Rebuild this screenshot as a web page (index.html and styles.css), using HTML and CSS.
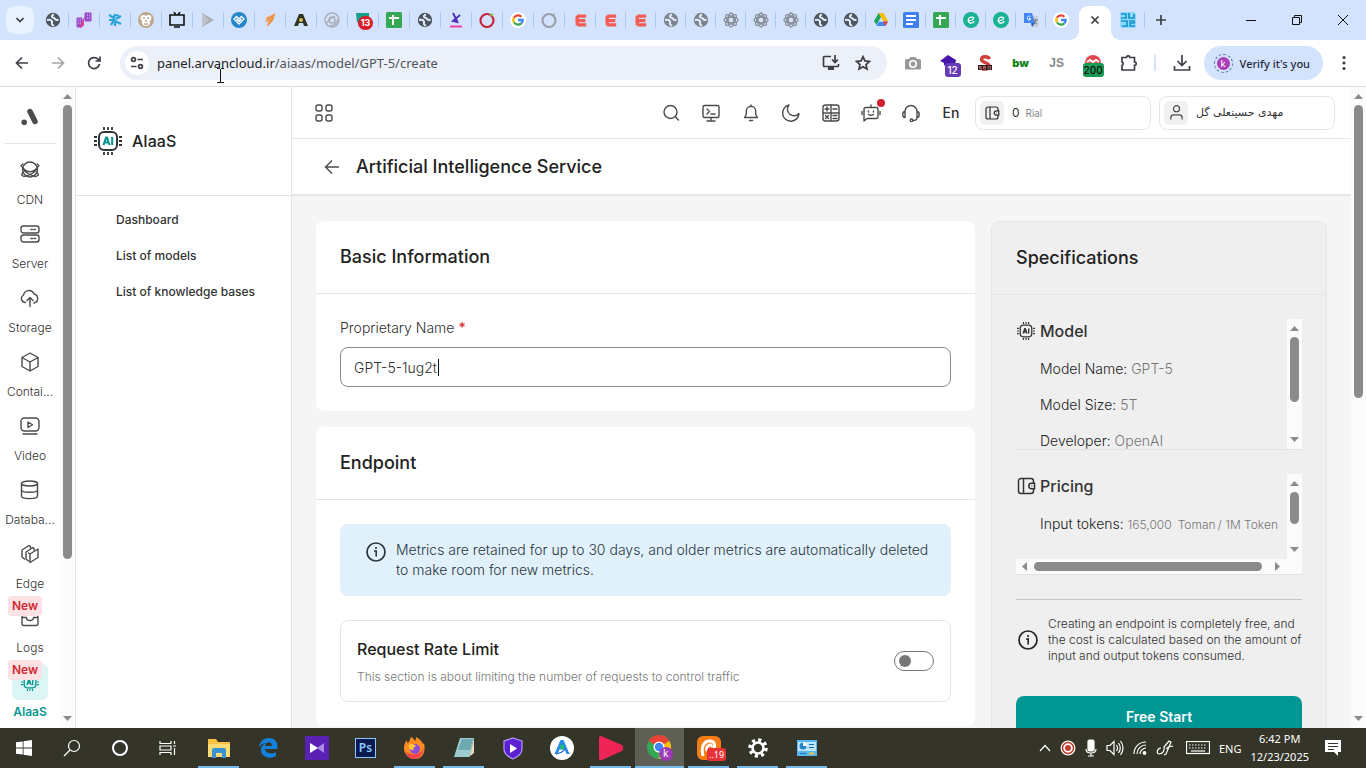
FILE: index.html
```html
<!DOCTYPE html>
<html lang="en">
<head>
<meta charset="utf-8">
<title>Artificial Intelligence Service</title>
<link rel="stylesheet" href="styles.css">
</head>
<body>
<svg class="defs" aria-hidden="true">
  <symbol id="globe" viewBox="0 0 16 16"><circle cx="8" cy="8" r="7.2" fill="currentColor"/><path d="M9 2.500c-2 .5-2.600 1.800-1.800 2.600.8.9 2 .4 2.500 1.400.5 1 1.500 1.800 3.800 1.200M2 8c2-.3 4.500 0 5 1.300.5 1.400-.8 1.700.2 3.200.4.700 1 1 2 1" fill="none" stroke="#e3ebfa" stroke-width="2"/></symbol>
  <symbol id="google" viewBox="0 0 16 16"><circle cx="8" cy="8" r="8" fill="#fff"/><g fill="none" stroke-width="2.300"><path d="M4 5.600A4.700 4.700 0 0 1 11.400 4.700" stroke="#ea4335"/><path d="M4.100 10.500A4.700 4.700 0 0 1 4 5.600" stroke="#fbbc05"/><path d="M11.300 11.400A4.700 4.700 0 0 1 4.100 10.500" stroke="#34a853"/><path d="M8 8h4.700a4.700 4.700 0 0 1-1.400 3.400" stroke="#4285f4"/></g></symbol>
  <symbol id="ebars" viewBox="0 0 16 16"><path d="M4 2.500h11M2 8h12M4 13.500h11" stroke="#f25c54" stroke-width="4"/><path d="M4 2v12" stroke="#f25c54" stroke-width="4"/></symbol>
  <symbol id="knot" viewBox="0 0 16 16"><g fill="none" stroke="#858c94" stroke-width="1.300"><ellipse cx="8" cy="8" rx="7" ry="3"/><ellipse cx="8" cy="8" rx="7" ry="3" transform="rotate(45 8 8)"/><ellipse cx="8" cy="8" rx="7" ry="3" transform="rotate(90 8 8)"/><ellipse cx="8" cy="8" rx="7" ry="3" transform="rotate(135 8 8)"/></g></symbol>
  <symbol id="sheet" viewBox="0 0 16 16"><rect width="16" height="16" rx="1.500" fill="#34a853"/><path d="M3 6h10M7 3v10" stroke="#fff" stroke-width="2"/></symbol>
  <symbol id="eapp" viewBox="0 0 16 16"><circle cx="8" cy="8" r="8" fill="#19b394"/><path d="M5.500 8.700c3 0 5.500-1 5-2.700-.5-1.500-4-1.200-5 1-1 2.500.8 4.500 2.800 4.200 1.500-.2 2.500-1 3-2.200" fill="none" stroke="#fff" stroke-width="1.300"/></symbol>
  <symbol id="chip" viewBox="0 0 28 28"><rect x="5" y="5" width="18" height="18" rx="5" fill="none" stroke="currentColor" stroke-width="2"/><path d="M10 0v3M14 0v3M18 0v3M10 25v3M14 25v3M18 25v3M0 10h3M0 14h3M0 18h3M25 10h3M25 14h3M25 18h3" stroke="currentColor" stroke-width="1.800"/><path d="M9.500 18l2.600-7.500h.8l2.600 7.500M10.500 15.500h4M18.200 10v8" fill="none" stroke="var(--chip-ink, currentColor)" stroke-width="2.100"/></symbol>
  <symbol id="wallet" viewBox="0 0 20 20"><path d="M17.500 7V5a2.500 2.500 0 0 0-2.500-2.500H5A2.500 2.500 0 0 0 2.500 5v10A2.500 2.500 0 0 0 5 17.500h10a2.500 2.500 0 0 0 2.500-2.500v-2M7.500 2.500v15M18.500 7.300h-3a2.700 2.700 0 0 0 0 5.400h3zM15.500 10h.8" fill="none" stroke="currentColor" stroke-width="1.500"/></symbol>
  <symbol id="info" viewBox="0 0 20 20"><circle cx="10" cy="10" r="9" fill="none" stroke="currentColor" stroke-width="1.700"/><path d="M8 9h2.200v5.500M10 5v2" fill="none" stroke="currentColor" stroke-width="1.600"/></symbol>
  <symbol id="up" viewBox="0 0 9 5"><path d="M0 5L4.500 0 9 5z" fill="#8b8b8b"/></symbol>
  <symbol id="down" viewBox="0 0 9 5"><path d="M0 0l4.500 5L9 0z" fill="#8b8b8b"/></symbol>
</svg>

<header class="tabstrip">
  <button class="tab-search" aria-label="Search tabs"><svg width="10" height="10" viewBox="0 0 10 10"><path d="M1.500 3l3.500 3.500L8.500 3" class="line2"/></svg></button>
  <div class="tabs wide">
    <button class="tab" aria-label="Tab"><svg class="fav dark"><use href="#globe"/></svg></button>
    <button class="tab" aria-label="Tab"><svg class="fav" viewBox="0 0 16 16"><path d="M1 6h5v9H1zM9 1h6v8H9zM5 11l5-7" fill="#9b4dca" stroke="#9b4dca"/><path d="M2 8h3M2 11h3M11 3h3M11 6h3" stroke="#e7c6f7" stroke-dasharray="1 1"/><path d="M4 15l3-2V8" stroke="#ec3f96" stroke-width="2" fill="none"/></svg></button>
    <button class="tab" aria-label="Tab"><svg class="fav" viewBox="0 0 16 16"><path d="M2 3l5 3 1-4M2 8h5l-3 5M9 7l5-3M8 9l6 3M9 3l3 1M8 10v4" stroke="#27a5d8" stroke-width="2.200" fill="none"/></svg></button>
    <button class="tab" aria-label="Tab"><svg class="fav" viewBox="0 0 16 16"><circle cx="8" cy="8" r="8" fill="#bda98d"/><circle cx="5.500" cy="6" r="3" fill="#fff"/><circle cx="10.500" cy="6" r="3" fill="#fff"/><circle cx="8" cy="10" r="4" fill="#fff"/><path d="M5 6h2M9 6h2M8 8v2M6 12h4" stroke="#9b8465"/></svg></button>
    <button class="tab" aria-label="Tab"><svg class="fav" viewBox="0 0 16 16"><path d="M1 3h14v10H1zM5 15h6M5 0l2 3M11 0L9 3" fill="none" stroke="#111" stroke-width="1.600"/></svg></button>
    <button class="tab" aria-label="Tab"><svg class="fav" viewBox="0 0 16 16"><path d="M2 1l12 7-12 7z" fill="#a9adb3"/><path d="M2 1l7 7-7 7z" fill="#bfc3ca"/></svg></button>
    <button class="tab" aria-label="Tab"><svg class="fav" viewBox="0 0 16 16"><circle cx="8" cy="8" r="8" fill="#2487c9"/><path d="M3 7l2.500-2.500L8 7l2.500-2.500L13 7l-5 5zM5.500 7L8 9.500 10.500 7" fill="none" stroke="#fff" stroke-width="1.300"/></svg></button>
    <button class="tab" aria-label="Tab"><svg class="fav" viewBox="0 0 16 16"><path d="M14 1L3 6l2 1-2 3 3-1-1 6 6-6 1-4z" fill="#f7a45f"/><path d="M4 9l8-6M6 13l6-8" stroke="#e07a2c"/></svg></button>
    <button class="tab" aria-label="Tab"><svg class="fav" viewBox="0 0 16 16"><path d="M1 14L6 2h4l5 12h-4l-1-3H6l-1 3z" fill="#30361f"/><circle cx="8" cy="8" r="2" fill="#d5bd57"/></svg></button>
    <button class="tab" aria-label="Tab"><svg class="fav" viewBox="0 0 16 16"><g fill="none" stroke="#aab1bb" stroke-width="1.600"><circle cx="8" cy="8" r="7"/><circle cx="8" cy="8" r="3"/><path d="M2 11c3 0 3-7 9-6M5 14c5 0 8-3 9-7"/></g></svg></button>
    <button class="tab badge-tab" aria-label="Tab"><svg class="fav" viewBox="0 0 16 16"><path d="M1 1h13v13l-7 1-5-5z" fill="#14a08a"/></svg><span class="fav-count">13</span></button>
    <button class="tab" aria-label="Tab"><svg class="fav"><use href="#sheet"/></svg></button>
    <button class="tab" aria-label="Tab"><svg class="fav dark"><use href="#globe"/></svg></button>
    <button class="tab" aria-label="Tab"><svg class="fav" viewBox="0 0 16 16"><path d="M5 1l5 10M12 3L5 9l5 1" fill="none" stroke="#4b2bb8" stroke-width="1.800"/><path d="M2 14.500h12" stroke="#f03ab0" stroke-width="2"/></svg></button>
    <button class="tab" aria-label="Tab"><svg class="fav" viewBox="0 0 16 16"><circle cx="8" cy="8.500" r="6.500" fill="none" stroke="#c9243f" stroke-width="2.200"/><path d="M10 3l4-2-1 4z" fill="#7db83a"/></svg></button>
    <button class="tab" aria-label="Tab"><svg class="fav"><use href="#google"/></svg></button>
    <button class="tab" aria-label="Tab"><svg class="fav" viewBox="0 0 16 16"><circle cx="8" cy="8.500" r="6.500" fill="none" stroke="#9aa1aa" stroke-width="2.200"/><path d="M10 3l4-2-1 4z" fill="#9aa1aa"/></svg></button>
    <button class="tab" aria-label="Tab"><svg class="fav bars"><use href="#ebars"/></svg></button>
  </div>
  <div class="tabs">
    <button class="tab" aria-label="Tab"><svg class="fav bars"><use href="#ebars"/></svg></button>
    <button class="tab" aria-label="Tab"><svg class="fav bars"><use href="#ebars"/></svg></button>
    <button class="tab" aria-label="Tab"><svg class="fav gray"><use href="#globe"/></svg></button>
    <button class="tab" aria-label="Tab"><svg class="fav gray"><use href="#globe"/></svg></button>
    <button class="tab" aria-label="Tab"><svg class="fav"><use href="#knot"/></svg></button>
    <button class="tab" aria-label="Tab"><svg class="fav"><use href="#knot"/></svg></button>
    <button class="tab" aria-label="Tab"><svg class="fav"><use href="#knot"/></svg></button>
    <button class="tab" aria-label="Tab"><svg class="fav dark"><use href="#globe"/></svg></button>
    <button class="tab" aria-label="Tab"><svg class="fav dark"><use href="#globe"/></svg></button>
    <button class="tab" aria-label="Tab"><svg class="fav" viewBox="0 0 16 16"><path d="M5.500 1h5L8 5.500 3.500 13 1 9z" fill="#20a464"/><path d="M5.500 1h5L15 9h-5z" fill="#fbbc04"/><path d="M3.500 14L6 9.500h9L12.500 14z" fill="#4285f4"/><path d="M10 9.500h5L12.500 14z" fill="#ea4335"/><path d="M8 5.500l2.300 4H5.700z" fill="#d3e3fd"/></svg></button>
    <button class="tab" aria-label="Tab"><svg class="fav" viewBox="0 0 16 16"><rect width="16" height="16" rx="1.500" fill="#3f7fee"/><path d="M3 4h10M3 8h10M3 12h7" stroke="#fff" stroke-width="1.800"/></svg></button>
    <button class="tab" aria-label="Tab"><svg class="fav"><use href="#sheet"/></svg></button>
    <button class="tab" aria-label="Tab"><svg class="fav"><use href="#eapp"/></svg></button>
    <button class="tab" aria-label="Tab"><svg class="fav"><use href="#eapp"/></svg></button>
    <button class="tab" aria-label="Tab"><svg class="fav" viewBox="0 0 16 16"><path d="M6 4h9v11H9z" fill="#c9ced6"/><path d="M1 1h8l3 10H1z" fill="#4285f4"/><path d="M8 11h4l-3 4z" fill="#2a56c6"/><path d="M7.500 4.500A2 2 0 1 0 7 8l.5-1.500H6" fill="none" stroke="#fff"/><path d="M10.500 8H15M13 7c0 3-1 4-2 5M11.500 9c1 2 2 3 3 3" fill="none" stroke="#737980"/></svg></button>
    <button class="tab last" aria-label="Tab"><svg class="fav"><use href="#google"/></svg></button>
  </div>
  <button class="tab active" aria-label="Close tab"><svg width="10" height="10" viewBox="0 0 10 10"><path d="M1.500 1.500l7 7M8.500 1.500l-7 7" class="line2"/></svg></button>
  <button class="tab after" aria-label="Tab"><svg class="fav" viewBox="0 0 16 16"><rect width="16" height="16" rx="2" fill="#8fd8f7"/><path d="M1 2h5v4H1M9 1v5h5V2M1 9h6v5H2M9 9h5v2h-4v3h5" fill="none" stroke="#1695d3" stroke-width="1.700"/></svg></button>
  <button class="new-tab" aria-label="New tab"><svg width="12" height="12" viewBox="0 0 12 12"><path d="M6 1v10M1 6h10" class="line2"/></svg></button>
  <div class="win-controls">
    <button aria-label="Minimize"><svg width="10" height="10" viewBox="0 0 10 10"><path d="M0 5.500h10" class="line1"/></svg></button>
    <button aria-label="Restore"><svg width="10" height="10" viewBox="0 0 10 10"><path d="M.5 2.500h7v7h-7zM2.500 2V.5h7v7H8" class="line1"/></svg></button>
    <button aria-label="Close"><svg width="10" height="10" viewBox="0 0 10 10"><path d="M0 0l10 10M10 0L0 10" class="line1"/></svg></button>
  </div>
</header>

<div class="toolbar">
  <button class="nav-btn" aria-label="Back"><svg width="16" height="16" viewBox="0 0 16 16"><path d="M14 8H3M8 2.500L2.500 8 8 13.500" class="line2"/></svg></button>
  <button class="nav-btn off" aria-label="Forward"><svg width="16" height="16" viewBox="0 0 16 16"><path d="M2 8h11M8 2.500L13.500 8 8 13.500" class="line2"/></svg></button>
  <button class="nav-btn" aria-label="Reload"><svg width="16" height="16" viewBox="0 0 16 16"><path d="M13.500 9A5.500 5.500 0 1 1 12 4.200L14 6M14 1.500V6H9.500" class="line2"/></svg></button>
  <div class="omnibox">
    <span class="site-chip"><svg width="14" height="14" viewBox="0 0 14 14"><path d="M7.500 3.500H13M1 10.500h5.500" class="line2"/><circle cx="3.500" cy="3.500" r="1.900" class="line2"/><circle cx="10.500" cy="10.500" r="1.900" class="line2"/></svg></span>
    <span class="url">panel.arvancloud.ir<span class="path">/aiaas/model/GPT-5/create</span></span>
    <button aria-label="Install app"><svg width="18" height="16" viewBox="0 0 18 16"><path d="M9 1.500H2.500q-1 0-1 1v8q0 1 1 1h13q1 0 1-1V9M13 0v7M10 4.500l3 3 3-3" class="line2"/><path d="M6 12h6v3H6z" fill="#3c4045"/></svg></button>
    <button aria-label="Bookmark"><svg width="16" height="16" viewBox="0 0 16 16"><path d="M8 1.700l1.900 4.200 4.600.5L11 9.500l1 4.600L8 11.700l-4 2.400 1-4.600L1.500 6.400l4.600-.5z" class="line2"/></svg></button>
  </div>
  <div class="extensions">
    <button aria-label="Screenshot"><svg width="16" height="14" viewBox="0 0 16 14"><path d="M1.500 3H4l1.500-2h5L12 3h2.500Q16 3 16 4.500v8q0 1-1.500 1h-13Q0 13.500 0 12.500v-8Q0 3 1.500 3z" fill="#999"/><circle cx="8" cy="8" r="3.200" fill="none" stroke="#fff" stroke-width="1.600"/></svg></button>
    <button aria-label="Extension" class="ext-badge"><svg width="18" height="18" viewBox="0 0 18 18"><path d="M8 1l8 5-1 5-6 3-5-3v-2L0 7z" fill="#4716a8"/></svg><span class="count violet">12</span></button>
    <button aria-label="SEO"><svg width="16" height="16" viewBox="0 0 16 16"><path d="M12.500 4C11 1 4.500 1 4.500 4.500S12 7 12 11s-7 4-8.500 1" fill="none" stroke="#cd4138" stroke-width="3.400"/><path d="M1 10h14v5H1z" fill="#301512"/><path d="M4.500 11.500H2v1.200h2.500V14H2M9 11.500H6.500V14H9M6.500 12.700H9M11 11.500h2.500V14H11z" fill="none" stroke="#d98b84" stroke-width=".7"/></svg></button>
    <button class="bw">bw</button>
    <button class="js">JS</button>
    <button aria-label="Extension" class="ext-badge"><svg width="18" height="18" viewBox="0 0 18 18"><path d="M1 9a8 8 0 0 1 16 0z" fill="#e5484d"/><path d="M3 8l3-2 3 2 3-2 3 2" stroke="#fff" stroke-width="2" fill="none"/></svg><span class="count green">200</span></button>
    <button aria-label="Extensions"><svg width="17" height="17" viewBox="0 0 17 17"><path d="M2 2.500h4.500a1.700 1.700 0 0 1 3.400 0h4.600v4.400a1.700 1.700 0 0 1 0 3.400v4.700H2v-4.500a2 2 0 0 0 0-3.600z" class="line2"/></svg></button>
  </div>
  <button class="download" aria-label="Downloads"><svg width="18" height="18" viewBox="0 0 18 18"><path d="M9 1v10M4.500 7L9 11.500 13.500 7M1.500 12v4h15v-4" class="line2"/></svg></button>
  <button class="profile"><span class="avatar">k</span>Verify it's you</button>
  <button class="menu" aria-label="Menu"><svg width="4" height="16" viewBox="0 0 4 16"><circle cx="2" cy="2.500" r="1.600"/><circle cx="2" cy="8" r="1.600"/><circle cx="2" cy="13.500" r="1.600"/></svg></button>
  <svg class="pointer" width="7" height="15" viewBox="0 0 7 15"><path d="M0 .5h2.500l1 1 1-1H7M0 14.500h7M3.500 1v13" fill="none" stroke="#111"/></svg>
</div>

<div class="app">
  <nav class="rail" aria-label="Products">
    <div class="rail-list">
      <a class="brand" href="#" aria-label="Arvan Cloud"><svg width="18" height="18" viewBox="0 0 18 18"><path d="M9 3.500l5 10" stroke="#4b4b4b" stroke-width="5.500" stroke-linecap="round"/><circle cx="3.200" cy="14.200" r="2.800" fill="#4b4b4b"/></svg></a>
      <a class="product" href="#"><span class="tile"><svg class="ico" viewBox="0 0 20 20"><circle cx="10" cy="9.500" r="7.500"/><path d="M3 4L1 5.500 3 8c4 5 10 5 14 0l2-2.500L17 4M3 12l-1.500 3L4 16.500c5-1 11-4 13-8M17 12l1.500 3-2.500 1.500c-5-1-11-4-13-8"/></svg></span><span class="name">CDN</span></a>
      <a class="product" href="#"><span class="tile"><svg class="ico" viewBox="0 0 20 20"><rect x="1" y="2" width="18" height="7" rx="2.500"/><rect x="1" y="11" width="18" height="7" rx="2.500"/><path d="M11 5.500h1.500M14 5.500h1.500M11 14.500h1.500M14 14.500h1.500"/></svg></span><span class="name">Server</span></a>
      <a class="product" href="#"><span class="tile"><svg class="ico" viewBox="0 0 20 20"><path d="M5.500 14.500a4 4 0 0 1-2-7.500 5.500 5.500 0 0 1 10.500-1 4.600 4.600 0 0 1 0 9M10 18.500V10M7 12.500L10 9.500l3 3"/></svg></span><span class="name">Storage</span></a>
      <a class="product" href="#"><span class="tile"><svg class="ico" viewBox="0 0 20 20"><path d="M10 1l8 4.500v9L10 19l-8-4.500v-9zM2 5.500l8 4.500 8-4.500M10 10v9"/></svg></span><span class="name">Contai...</span></a>
      <a class="product" href="#"><span class="tile"><svg class="ico" viewBox="0 0 20 20"><rect x="1" y="2" width="18" height="13" rx="3.500"/><path d="M8 6v5.500l4.500-2.750zM3 18h14"/></svg></span><span class="name">Video</span></a>
      <a class="product" href="#"><span class="tile"><svg class="ico" viewBox="0 0 20 20"><ellipse cx="9.500" cy="3.500" rx="8" ry="2.500"/><path d="M1.500 3.500v12.500c0 3.500 16 3.500 16 0V3.500M1.500 10c0 3 16 3 16 0"/></svg></span><span class="name">Databa...</span></a>
      <a class="product" href="#"><span class="tile"><svg class="ico" viewBox="0 0 20 20"><path d="M4.500 15L2 13V6l7-4.500 1.500 1V4M8.500 17L6 15V8l7-4.500 1 1V6M10 10l8-5v8.500l-8 5zL8.500 9"/></svg></span><span class="name">Edge</span></a>
      <a class="product" href="#"><span class="tile"><svg class="ico" viewBox="0 0 20 20"><path d="M2 9l2-6h12l2 6v6.500a2 2 0 0 1-2 2H4a2 2 0 0 1-2-2zM2 9.500h4.500c0 4 7 4 7 0H18"/></svg></span><span class="name">Logs</span><span class="new">New</span></a>
      <a class="product current" href="#"><span class="tile"><svg class="ico solid"><use href="#chip"/></svg></span><span class="name">AIaaS</span><span class="new">New</span></a>
    </div>
    <div class="scroll"><svg class="arrow"><use href="#up"/></svg><div class="track"><div class="thumb" style="height:75%"></div></div><svg class="arrow"><use href="#down"/></svg></div>
  </nav>

  <aside class="service">
    <div class="service-head"><svg class="chip-logo"><use href="#chip"/></svg><span>AIaaS</span></div>
    <ul class="service-menu">
      <li><a href="#">Dashboard</a></li>
      <li><a href="#">List of models</a></li>
      <li><a href="#">List of knowledge bases</a></li>
    </ul>
  </aside>

  <main class="main">
    <div class="topbar">
      <button class="tool" aria-label="Apps"><svg class="ico" viewBox="0 0 20 20"><rect x="2" y="2" width="6" height="6" rx="2"/><rect x="12" y="2" width="6" height="6" rx="2"/><rect x="2" y="12" width="6" height="6" rx="2"/><rect x="12" y="12" width="6" height="6" rx="2"/></svg></button>
      <div class="tools">
        <button class="tool" aria-label="Search"><svg class="ico" viewBox="0 0 20 20"><circle cx="9.500" cy="9" r="6.500"/><path d="M14.500 14l3 3"/></svg></button>
        <button class="tool" aria-label="Console"><svg class="ico" viewBox="0 0 20 20"><rect x="2" y="2.500" width="16" height="12" rx="1.500"/><path d="M6 6l2.500 2.500L6 11M10 11h4M10 14.500v3.500M6 18h8"/></svg></button>
        <button class="tool" aria-label="Notifications"><svg class="ico" viewBox="0 0 20 20"><path d="M3.500 14.500h13l-1.800-3V8a4.700 4.700 0 0 0-9.400 0v3.500zM8.500 17.500h3M10 2v1.500"/></svg></button>
        <button class="tool" aria-label="Dark mode"><svg class="ico" viewBox="0 0 20 20"><path d="M8 2a6.500 6.500 0 0 0 10 8.500A8.200 8.200 0 1 1 8 2z"/></svg></button>
        <button class="tool" aria-label="Calculator"><svg class="ico" viewBox="0 0 20 20"><rect x="2" y="2" width="16" height="16" rx="2.500"/><path d="M10 2v16M2 10h16M4 6h4M6 4v4M12 6h4M4.500 12.500l3 3M7.500 12.500l-3 3M12 12.500h4M12 15.500h4"/></svg></button>
        <button class="tool bot" aria-label="Assistant"><svg class="ico" viewBox="0 0 20 20"><path d="M3 18V6a1.500 1.500 0 0 1 1.500-1.500h11A1.500 1.500 0 0 1 17 6v8a1.500 1.500 0 0 1-1.500 1.500H6zM10 2v2.500M1 8.500v3M19 8.500v3M7.500 8v1M12.500 8v1M7.500 11.500q2.500 1.500 5 0"/></svg></button>
        <button class="tool" aria-label="Support"><svg class="ico" viewBox="0 0 20 20"><path d="M4 8.500a6 6 0 0 1 12 0M4 8.500c-3 0-3 6 0 6zM16 8.500c3 0 3 6 0 6zM16 14.500q0 3-4 3"/><circle cx="10.500" cy="17.300" r="1.300"/></svg></button>
        <button class="tool lang">En</button>
        <button class="account wallet"><span class="mini"><svg class="wallet-ico"><use href="#wallet"/></svg></span><span class="amount">0</span><span class="unit">Rial</span></button>
        <button class="account"><span class="mini"><svg class="user-ico" viewBox="0 0 18 18"><circle cx="9" cy="5" r="3.200"/><path d="M3 16.500v-2q0-3 3-3h6q3 0 3 3v2"/></svg></span><span class="person" lang="fa" dir="rtl">مهدی حسینعلی گل</span></button>
      </div>
    </div>
    <div class="titlebar">
      <button class="back" aria-label="Back"><svg width="16" height="16" viewBox="0 0 16 16"><path d="M15 8H2M8 1.500L1.500 8 8 14.500"/></svg></button>
      <h1>Artificial Intelligence Service</h1>
    </div>
    <div class="content">
      <div class="forms">
        <section class="card">
          <h2>Basic Information</h2>
          <div class="card-body">
            <label for="pname">Proprietary Name <span class="req">*</span></label>
            <div class="field"><input id="pname" type="text" value="GPT-5-1ug2t"><span class="caret"></span></div>
          </div>
        </section>
        <section class="card">
          <h2>Endpoint</h2>
          <div class="card-body">
            <div class="notice"><svg class="info"><use href="#info"/></svg><p>Metrics are retained for up to 30 days, and older metrics are automatically deleted to make room for new metrics.</p></div>
            <div class="option">
              <div><h3><label for="limit">Request Rate Limit</label></h3><p>This section is about limiting the number of requests to control traffic</p></div>
              <input id="limit" class="switch" type="checkbox" role="switch">
            </div>
          </div>
        </section>
      </div>
      <aside class="specs">
        <h2>Specifications</h2>
        <div class="specs-body">
          <div class="pane model">
            <div class="pane-view">
              <h3><svg class="spec-ico"><use href="#chip"/></svg>Model</h3>
              <p>Model Name: <span>GPT-5</span></p>
              <p>Model Size: <span>5T</span></p>
              <p>Developer: <span>OpenAI</span></p>
            </div>
            <div class="scroll"><svg class="arrow"><use href="#up"/></svg><div class="track"><div class="thumb" style="height:69%"></div></div><svg class="arrow"><use href="#down"/></svg></div>
          </div>
          <div class="pane pricing">
            <div class="pane-view">
              <h3><svg class="spec-ico"><use href="#wallet"/></svg>Pricing</h3>
              <p>Input tokens: <span class="price"><span>165,000</span><span>Toman</span></span><span class="per">/ 1M Token</span></p>
            </div>
            <div class="scroll"><svg class="arrow"><use href="#up"/></svg><div class="track"><div class="thumb" style="height:65%"></div></div><svg class="arrow"><use href="#down"/></svg></div>
            <div class="scroll flat"><svg class="arrow" viewBox="0 0 5 9"><path d="M5 0L0 4.500 5 9z" fill="#8b8b8b"/></svg><div class="track"><div class="thumb" style="width:97%"></div></div><svg class="arrow" viewBox="0 0 5 9"><path d="M0 0l5 4.500L0 9z" fill="#8b8b8b"/></svg></div>
          </div>
          <div class="cost"><svg class="info"><use href="#info"/></svg><p>Creating an endpoint is completely free, and the cost is calculated based on the amount of input and output tokens consumed.</p></div>
          <button class="start">Free Start</button>
        </div>
      </aside>
    </div>
  </main>
  <div class="scroll page"><svg class="arrow"><use href="#up"/></svg><div class="track"><div class="thumb" style="height:48.5%"></div></div><svg class="arrow"><use href="#down"/></svg></div>
</div>

<footer class="taskbar">
  <div class="system">
    <button aria-label="Start"><svg width="16" height="16" viewBox="0 0 16 16"><path d="M0 2.300L6.700 1.400v6.200H0zM7.500 1.300L16 0v7.600H7.500zM0 8.400h6.700v6.200L0 13.700zM7.500 8.400H16V16l-8.500-1.300z" fill="#fff"/></svg></button>
    <button aria-label="Search"><svg width="18" height="18" viewBox="0 0 18 18"><circle cx="11" cy="7" r="5.500"/><path d="M7 11l-6 6"/></svg></button>
    <button aria-label="Cortana"><svg width="18" height="18" viewBox="0 0 18 18"><circle cx="9" cy="9" r="7" stroke-width="2"/></svg></button>
    <button aria-label="Task view"><svg width="18" height="18" viewBox="0 0 18 18"><path d="M1 2v2.500h11V2M1 16v-2.500h11V16M1 7h11v4H1zM15.500 2v3M15.500 9v7M14 7h3"/></svg></button>
  </div>
  <div class="apps">
    <button class="run" aria-label="File Explorer"><svg width="22" height="20" viewBox="0 0 22 20"><path d="M0 1h8l2 3h12v15H0z" fill="#f6c142"/><path d="M0 6h22v13H0z" fill="#fbdb76"/><path d="M4 20v-8q0-2 2-2h10q2 0 2 2v8h-4v-5H8v5z" fill="#3992d3"/></svg></button>
    <button aria-label="Edge"><svg width="20" height="20" viewBox="0 0 20 20"><path d="M1 9C2 3 6 0 11 0c6 0 9 4 8.500 11H7c0 4 7 6 11 3v4c-6 4-15 1-15-6 0-4 3-6 5-7-3 0-5 2-7 4zm6-1h7c0-5-6-5-7 0z" fill="#1581dc"/></svg></button>
    <button aria-label="Media"><svg width="24" height="24" viewBox="0 0 24 24"><path d="M0 0h24v24H0z" fill="#5b21b5"/><path d="M19 7v10l-7-5z" fill="#a989e3"/><path d="M5 7l8 5-8 5z" fill="#fff"/></svg></button>
    <button aria-label="Photoshop"><span class="ps">Ps</span></button>
    <button class="run" aria-label="Firefox"><svg width="22" height="22" viewBox="0 0 22 22"><path d="M11 22C4 22 0 17 0 11c0-3 1-6 3-8v3l2-1 2-5c2 1 3 2 4 4 1-1 1-3 1-4 5 3 6 5 7 7l1-1c2 8-1 16-9 16z" fill="#ff8b21"/><path d="M1 13c2 6 16 7 19-3-1 8-5 12-10 12S2 18 1 13z" fill="#f0414f"/><circle cx="11" cy="12" r="5" fill="#8c4bd8"/><path d="M5 8c2-2 5-1 7 1l-3 2 1 2c-4 0-6-2-5-5z" fill="#ffca3a"/></svg></button>
    <button class="run" aria-label="Notepad"><svg width="22" height="22" viewBox="0 0 22 22"><path d="M7 1h14l-5 19H1z" fill="#9cccd1"/><path d="M9 2h11l-3 11H5z" fill="#6da9b1"/><path d="M16 20l5-19v15z" fill="#e1d9c2"/></svg></button>
    <button aria-label="VPN"><svg width="20" height="23" viewBox="0 0 20 23"><path d="M10 1l9 3v8q0 6-9 10-9-4-9-10V4z" fill="#5b20d2" stroke="#b39bf0"/><path d="M7 7l7 4.500L7 16z" fill="#fff"/></svg></button>
    <button aria-label="App store"><svg width="24" height="24" viewBox="0 0 24 24"><circle cx="12" cy="12" r="12" fill="#fff"/><path d="M10.500 4h3l6 14h-3l-2-4.500h-5L7.500 18h-3z" fill="#2789e9"/><circle cx="12" cy="11" r="2.500" fill="#20ba79"/><path d="M6 18q6-1 9-5" fill="none" stroke="#1d5fc0"/></svg></button>
    <button class="run" aria-label="Player"><svg width="24" height="24" viewBox="0 0 24 24"><path d="M2 0q-2 0-2 2v20q0 3 3 2l20-9q3-3 0-6z" fill="#ee2457"/></svg></button>
    <button class="run focus" aria-label="Chrome"><svg width="26" height="26" viewBox="0 0 26 26"><circle cx="12" cy="12" r="12" fill="#34a853"/><path d="M12 12L1.600 6A12 12 0 0 1 22.400 6z" fill="#ea4335"/><path d="M12 12L22.400 6A12 12 0 0 1 12 24z" fill="#fbbc05"/><circle cx="12" cy="12" r="5.500" fill="#fff"/><circle cx="12" cy="12" r="4.200" fill="#4285f4"/><circle cx="19" cy="19" r="7" fill="#9b3bb5"/></svg><span class="on-k">k</span></button>
    <button class="run" aria-label="Messenger"><svg width="24" height="24" viewBox="0 0 24 24"><rect width="24" height="24" rx="6" fill="#f57c14"/><path d="M6 20C4 12 6 5 13 5c6 0 6 8 1 10-4 1-6-2-3-5 2-2 4-1 3 1" fill="none" stroke="#fff" stroke-width="3"/></svg><span class="on-19">..19</span></button>
    <button class="run" aria-label="Settings"><svg width="20" height="20" viewBox="0 0 20 20"><circle cx="10" cy="10" r="8" class="teeth"/><circle cx="10" cy="10" r="5.500" class="gear"/></svg></button>
    <button class="run" aria-label="Control panel"><svg width="20" height="16" viewBox="0 0 20 16"><path d="M0 0h20v16H0z" fill="#58b6ef"/><path d="M1 2h18v9H1z" fill="#bfe5fc"/><circle cx="6" cy="6" r="3.500" fill="#2584c7"/><path d="M6 6V2a4 4 0 0 1 4 4z" fill="#fff"/><path d="M12 4h5v1h-5zM12 7h5v1h-5zM3 13h6v1H3z" fill="#1670b0"/><path d="M12 12.500h5v2h-5z" fill="#f2c643"/></svg></button>
  </div>
  <div class="tray">
    <svg width="12" height="8" viewBox="0 0 12 8"><path d="M1 7l5-5.500L11 7"/></svg>
    <svg width="16" height="16" viewBox="0 0 16 16"><circle cx="8" cy="8" r="7.500" fill="#fff" stroke="none"/><circle cx="8" cy="8" r="5.500" stroke="#c43c2c" stroke-width="1.500"/><circle cx="8" cy="8" r="3" fill="#c43c2c" stroke="none"/></svg>
    <svg width="12" height="18" viewBox="0 0 12 18"><rect x="3" y="1" width="6" height="11" rx="1.500" fill="#fff"/><path d="M1 10q0 4 5 4t5-4M6 14v3M3 17h6"/></svg>
    <svg width="18" height="16" viewBox="0 0 18 16"><path d="M1 5.500h3l4-4v13l-4-4H1zM10.500 5q2 3 0 6M12.500 3q3.500 5 0 10M14.500 1q5 7 0 14"/></svg>
    <svg width="14" height="14" viewBox="0 0 14 14"><path d="M1 13C1 6 6 1 13 1M4 13c0-5 4-9 9-9M7 13c0-3 3-6 6-6"/><circle cx="11.500" cy="12" r="1.300" fill="#fff"/></svg>
    <svg width="18" height="16" viewBox="0 0 18 16"><path d="M5 8c-4 0-5 6-2 6 4 0 6-4 5-7L13 1l2 1-5 12-2 1M10 9c3-4 5-2 7-3"/></svg>
    <svg class="keys" width="24" height="14" viewBox="0 0 24 14"><rect x=".5" y=".5" width="23" height="12"/><path d="M3 4h18M3 7h18" stroke-dasharray="1.500 1.500"/><path d="M5 10h14"/></svg>
    <span class="lang-code">ENG</span>
    <time class="clock">6:42 PM<br>12/23/2025</time>
    <button aria-label="Notifications"><svg width="18" height="18" viewBox="0 0 18 18"><path d="M1 1h16v12h-3v4l-4-4H1z" fill="#fff" stroke="none"/><path d="M4 4.500h10M4 7.500h10M4 10.500h6" stroke="#343528"/></svg></button>
  </div>
</footer>
</body>
</html>
```
FILE: styles.css
```css
* { box-sizing: border-box; }
html, body { height: 100%; }
body {
  margin: 0;
  display: flex;
  flex-direction: column;
  height: 100vh;
  overflow: hidden;
  font-family: Inter, "Liberation Sans", sans-serif;
  font-size: 14px;
  font-weight: 300;
  color: #303030;
  background: #fff;
}
button { font: inherit; color: inherit; border: 0; padding: 0; margin: 0; background: none; }
a { color: inherit; text-decoration: none; }
h1, h2, h3, p, ul { margin: 0; padding: 0; }
svg { display: block; flex: none; }
.defs { display: none; }

/* browser tabs */
.tabstrip { display: flex; height: 40px; flex: none; background: #d3e3fd; align-items: center; }
.tab-search { width: 28px; height: 28px; margin: 0 4px 0 6px; border-radius: 9px; background: #e9f2ff; display: grid; place-items: center; }
.line1 { fill: none; stroke: #111; stroke-width: 1; }
.line2 { fill: none; stroke: #3c4045; stroke-width: 1.700; }
.tabs { display: flex; }
.tab { width: 30px; height: 16px; display: grid; place-items: center; border-right: 1px solid #a9c7f8; }
.wide .tab { width: 31px; }
.tab.last { border-color: transparent; }
.fav { width: 16px; height: 16px; }
.fav.bars { width: 13px; height: 13px; }
.fav.dark { color: #4d565f; }
.fav.gray { color: #7c858e; }
.badge-tab { position: relative; }
.fav-count { position: absolute; left: 10px; top: 4px; width: 15px; height: 14px; border-radius: 7px; background: #d81e28; color: #fff; font: 700 9px/14px Inter, sans-serif; text-align: center; }
.tab.active { width: 32px; height: 34px; align-self: flex-end; margin-left: 3px; border: 0; border-radius: 9px 9px 0 0; background: #fff; padding-bottom: 6px; position: relative; }
.tab.active::before, .tab.active::after { content: ""; position: absolute; bottom: 0; width: 10px; height: 10px; }
.tab.active::before { right: 100%; background: radial-gradient(circle at 0 0, transparent 10px, #fff 10px); }
.tab.active::after { left: 100%; background: radial-gradient(circle at 100% 0, transparent 10px, #fff 10px); }
.tab.after { width: 34px; }
.new-tab { width: 32px; height: 32px; display: grid; place-items: center; }
.win-controls { margin-left: auto; display: flex; }
.win-controls button { width: 46px; height: 40px; display: grid; place-items: center; }

/* address row */
.toolbar { position: relative; display: flex; align-items: center; height: 47px; flex: none; padding: 0 7px 0 4px; border-bottom: 1px solid #dcdcdc; background: #fff; font-family: "Noto Sans", "Open Sans", sans-serif; font-weight: 400; }
.nav-btn { width: 36px; height: 36px; display: grid; place-items: center; }
.nav-btn.off { opacity: .45; }
.omnibox { flex: 1; display: flex; align-items: center; gap: 8px; height: 34px; margin-left: 8px; padding: 0 12px 0 5px; border-radius: 17px; background: #ecf1f9; }
.site-chip { width: 24px; height: 24px; border-radius: 12px; background: #fff; display: grid; place-items: center; }
.url { flex: 1; font-size: 13px; line-height: 18px; color: #202124; }
.path { color: #50555b; }
.omnibox button { width: 24px; height: 24px; display: grid; place-items: center; }
.extensions { display: flex; padding: 0 7px 0 8px; margin-right: 8px; border-right: 2px solid #d3e3fd; height: 16px; align-items: center; }
.extensions button { width: 36px; height: 24px; display: grid; place-items: center; }
.ext-badge { position: relative; }
.count { position: absolute; left: 14px; top: 12px; min-width: 16px; height: 14px; padding: 0 1px; border-radius: 3px; font: 500 10px/14px Inter, sans-serif; text-align: center; }
.count.violet { background: #663bb7; color: #fff; }
.count.green { left: 8px; min-width: 20px; background: #169b55; color: #111; }
.extensions .bw { font: 900 11px/24px Inter, sans-serif; color: #15801c; }
.extensions .js { font: 700 12px/24px "Liberation Sans", sans-serif; color: #888; }
.download { width: 36px; height: 36px; display: grid; place-items: center; }
.profile { display: flex; align-items: center; gap: 7px; height: 34px; margin: 0 6px 0 4px; padding: 0 13px 0 10px; border-radius: 17px; background: #d3e3fd; color: #1f2a3d; font-size: 11px; font-weight: 500; white-space: nowrap; }
.avatar { width: 19px; height: 19px; border-radius: 50%; border: 1px dashed #4a6fa8; background: #a83fb8; background-clip: content-box; padding: 2px; color: #fff; font-size: 9px; line-height: 13px; text-align: center; }
.menu { width: 30px; height: 30px; display: grid; place-items: center; fill: #3c4045; }
.pointer { position: absolute; left: 217px; top: 28px; }

/* scroll bars */
.scroll { width: 15px; flex: none; display: flex; flex-direction: column; align-items: center; background: #fbfbfb; padding: 7px 0; gap: 6px; }
.arrow { width: 9px; height: 5px; }
.track { flex: 1; width: 9px; }
.thumb { width: 9px; border-radius: 5px; background: #8b8b8b; }
.scroll.flat { width: auto; height: 15px; flex-direction: row; padding: 0 7px 0 6px; }
.flat .arrow { width: 5px; height: 9px; }
.flat .track { width: auto; height: 9px; margin-left: 1px; }
.flat .thumb { height: 9px; }

/* product rail */
.app { flex: 1; min-height: 0; display: flex; }
.rail { display: flex; width: 76px; flex: none; border-right: 1px solid #e5e5e5; }
.rail-list { width: 60px; overflow: hidden; }
.brand { display: grid; place-items: center; height: 57px; margin: 0 4px 10px; border-bottom: 1px solid #e5e5e5; padding-top: 4px; }
.product { display: flex; flex-direction: column; align-items: center; position: relative; height: 64px; padding: 0 4px; }
.tile { width: 36px; height: 36px; border-radius: 6px; margin-top: -2px; display: grid; place-items: center; flex: none; }
.ico { width: 20px; height: 20px; fill: none; stroke: #4b4b4b; stroke-width: 1.400; stroke-linejoin: round; stroke-linecap: round; }
.name { margin-top: 2px; white-space: nowrap; font-size: 12px; line-height: 20px; }
.new { position: absolute; left: 8px; top: -6px; padding: 0 4px; border-radius: 4px; background: #fce2e4; color: #cf2a35; font-size: 12px; line-height: 20px; font-weight: 600; }
.current .tile { background: #dcf6f5; }
.current .name { font-weight: 600; font-size: 12px; color: #089590; }
.ico.solid { stroke: none; color: #089590; width: 18px; height: 18px; }

/* service menu */
.service { width: 216px; flex: none; border-right: 1px solid #e5e5e5; }
.service-head { display: flex; align-items: center; gap: 10px; height: 109px; padding-left: 18px; border-bottom: 1px solid #e5e5e5; font-size: 16px; font-weight: 500; color: #222; }
.chip-logo { width: 28px; height: 28px; color: #2f3437; --chip-ink: #089590; }
.service-menu { list-style: none; padding: 6px 0 0 40px; }
.service-menu a { display: block; line-height: 36px; font-size: 12px; font-weight: 500; color: #333; }

/* main area */
.main { flex: 1; min-width: 0; display: flex; flex-direction: column; background: #f5f5f5; overflow: hidden; }
.topbar { display: flex; align-items: center; justify-content: space-between; height: 52px; flex: none; padding: 0 16px 0 12px; background: #fff; border-bottom: 1px solid #e5e5e5; }
.tools { display: flex; align-items: center; }
.tool { width: 40px; height: 40px; display: grid; place-items: center; }
.lang { font-size: 14px; font-weight: 500; }
.bot { position: relative; }
.bot::after { content: ""; position: absolute; left: 26px; top: 6px; width: 8px; height: 8px; border-radius: 4px; background: #cf1f30; }
.account { display: flex; align-items: center; width: 176px; height: 34px; padding: 0 4px; border: 1px solid #e5e5e5; border-radius: 8px; }
.wallet { margin: 0 8px 0 4px; }
.mini { width: 24px; height: 24px; border-radius: 5px; background: #f0f0f0; display: grid; place-items: center; }
.wallet-ico { width: 16px; height: 16px; }
.user-ico { width: 17px; height: 17px; fill: none; stroke: #4b4b4b; stroke-width: 1.300; }
.amount { margin: 0 6px 0 8px; font-size: 12px; font-weight: 400; }
.unit { font-size: 10px; color: #666; }
.person { margin-left: 8px; font: 11px/20px "DejaVu Sans", sans-serif; }
.titlebar { display: flex; align-items: center; gap: 16px; height: 57px; flex: none; padding-left: 32px; background: #fff; border-bottom: 2px solid #e5e5e5; }
.back { width: 16px; height: 16px; fill: none; stroke: #4b4b4b; stroke-width: 1.400; }
h1, h2 { font-size: 18px; line-height: 24px; font-weight: 500; color: #222; }
.content { display: grid; grid-template-columns: minmax(0, 1fr) 336px; gap: 16px; padding: 25px 24px; align-items: start; }
.forms { display: grid; gap: 16px; }
.card { background: #fff; border-radius: 8px; }
.card h2 { padding: 24px; border-bottom: 1px solid #e5e5e5; }
.card-body { padding: 24px; }
.card-body > label { display: block; line-height: 20px; padding-bottom: 9px; }
.req { color: #d8343c; font-weight: 500; }
.field { position: relative; }
.field input { display: block; width: 100%; height: 40px; padding: 0 13px; border: 1px solid #8b8b8b; border-radius: 8px; outline: 0; background: #fff; font: inherit; color: #303030; }
.caret { position: absolute; left: 98px; top: 12px; width: 1px; height: 17px; background: #111; }
.notice { display: flex; gap: 10px; padding: 16px 12px 16px 26px; border-radius: 8px; background: #e0f1fb; line-height: 20px; color: #2b3640; }
.info { width: 20px; height: 20px; }
.notice .info { margin-top: 2px; }
.option { display: flex; align-items: center; justify-content: space-between; margin-top: 24px; padding: 16px; border: 1px solid #e5e5e5; border-radius: 8px; }
.option h3 { font-size: 16px; line-height: 24px; font-weight: 500; color: #222; padding-bottom: 8px; }
.option p { font-size: 12px; line-height: 16px; color: #777; }
.switch { appearance: none; width: 40px; height: 20px; margin: 0; border: 1px solid #777; border-radius: 10px; background: #fff; display: flex; align-items: center; padding-left: 4px; }
.switch::before { content: ""; width: 12px; height: 12px; border-radius: 6px; background: #777; }

/* specifications */
.specs { border: 1px solid #e5e5e5; border-radius: 8px; background: #efefef; }
.specs h2 { padding: 24px; border-bottom: 1px solid #e5e5e5; }
.specs-body { padding: 24px; }
.pane { display: grid; grid-template-columns: minmax(0, 1fr) 15px; border-bottom: 1px solid #e2e2e2; margin-bottom: 24px; }
.pane-view { overflow: hidden; }
.model .pane-view { height: 130px; }
.pricing { background: #fbfbfb; }
.pricing .pane-view { height: 85px; background: #efefef; }
.pane h3 { display: flex; align-items: center; gap: 4px; height: 24px; font-size: 16px; font-weight: 500; color: #333; white-space: nowrap; }
.spec-ico { width: 20px; height: 20px; }
.model .spec-ico { padding: 1px; }
.pane p { padding: 16px 0 0 24px; line-height: 20px; white-space: nowrap; color: #222; }
.pane p span { color: #777; }
.pane .price { display: inline-flex; gap: 6px; font-size: 12px; }
.pane .per { font-size: 12px; padding-left: 2px; }
.cost { display: flex; align-items: center; gap: 10px; padding: 16px 0 32px 2px; border-top: 1px solid #c6c6c6; font-size: 12px; line-height: 16px; }
.cost .info { color: #222; }
.start { display: block; width: 100%; height: 40px; border-radius: 8px; background: #009694; color: #fff; font-weight: 600; }

/* taskbar */
.taskbar { display: flex; height: 40px; flex: none; background: #343528; color: #fff; font-family: "Noto Sans", "Open Sans", sans-serif; font-size: 11px; font-weight: 400; }
.taskbar svg { fill: none; stroke: #fff; stroke-width: 1.200; }
.taskbar .apps svg { stroke: none; }
.teeth { stroke: #fff; stroke-width: 3.500; stroke-dasharray: 3.100 3.180; }
.gear { stroke: #fff; stroke-width: 2.600; }
.system, .apps { display: flex; }
.system button { width: 48px; display: grid; place-items: center; }
.system button:first-child svg { stroke: none; }
.apps { margin-left: 2px; }
.apps button { width: 49px; height: 40px; display: grid; place-items: center; position: relative; }
.apps .run::after { content: ""; position: absolute; left: 4px; right: 4px; bottom: 0; height: 2px; background: #76b9ed; }
.apps .focus { background: #5e5f55; }
.apps .focus::after { left: 0; right: 0; }
.ps { width: 21px; height: 20px; border: 1px solid #8ec7ff; background: #0a1a50; color: #8ec7ff; font-size: 12px; font-weight: 600; line-height: 18px; }
.on-k { position: absolute; left: 28px; top: 18px; font-size: 10px; line-height: 14px; }
.on-19 { position: absolute; left: 23px; top: 20px; padding: 0 2px; border-radius: 3px; background: #e93237; font-size: 9px; line-height: 13px; }
.tray { margin-left: auto; display: flex; align-items: center; gap: 9px; padding-right: 24px; }
.keys { margin-left: 3px; }
.clock { text-align: center; line-height: 18px; }
.tray button { margin-left: 6px; }
```
